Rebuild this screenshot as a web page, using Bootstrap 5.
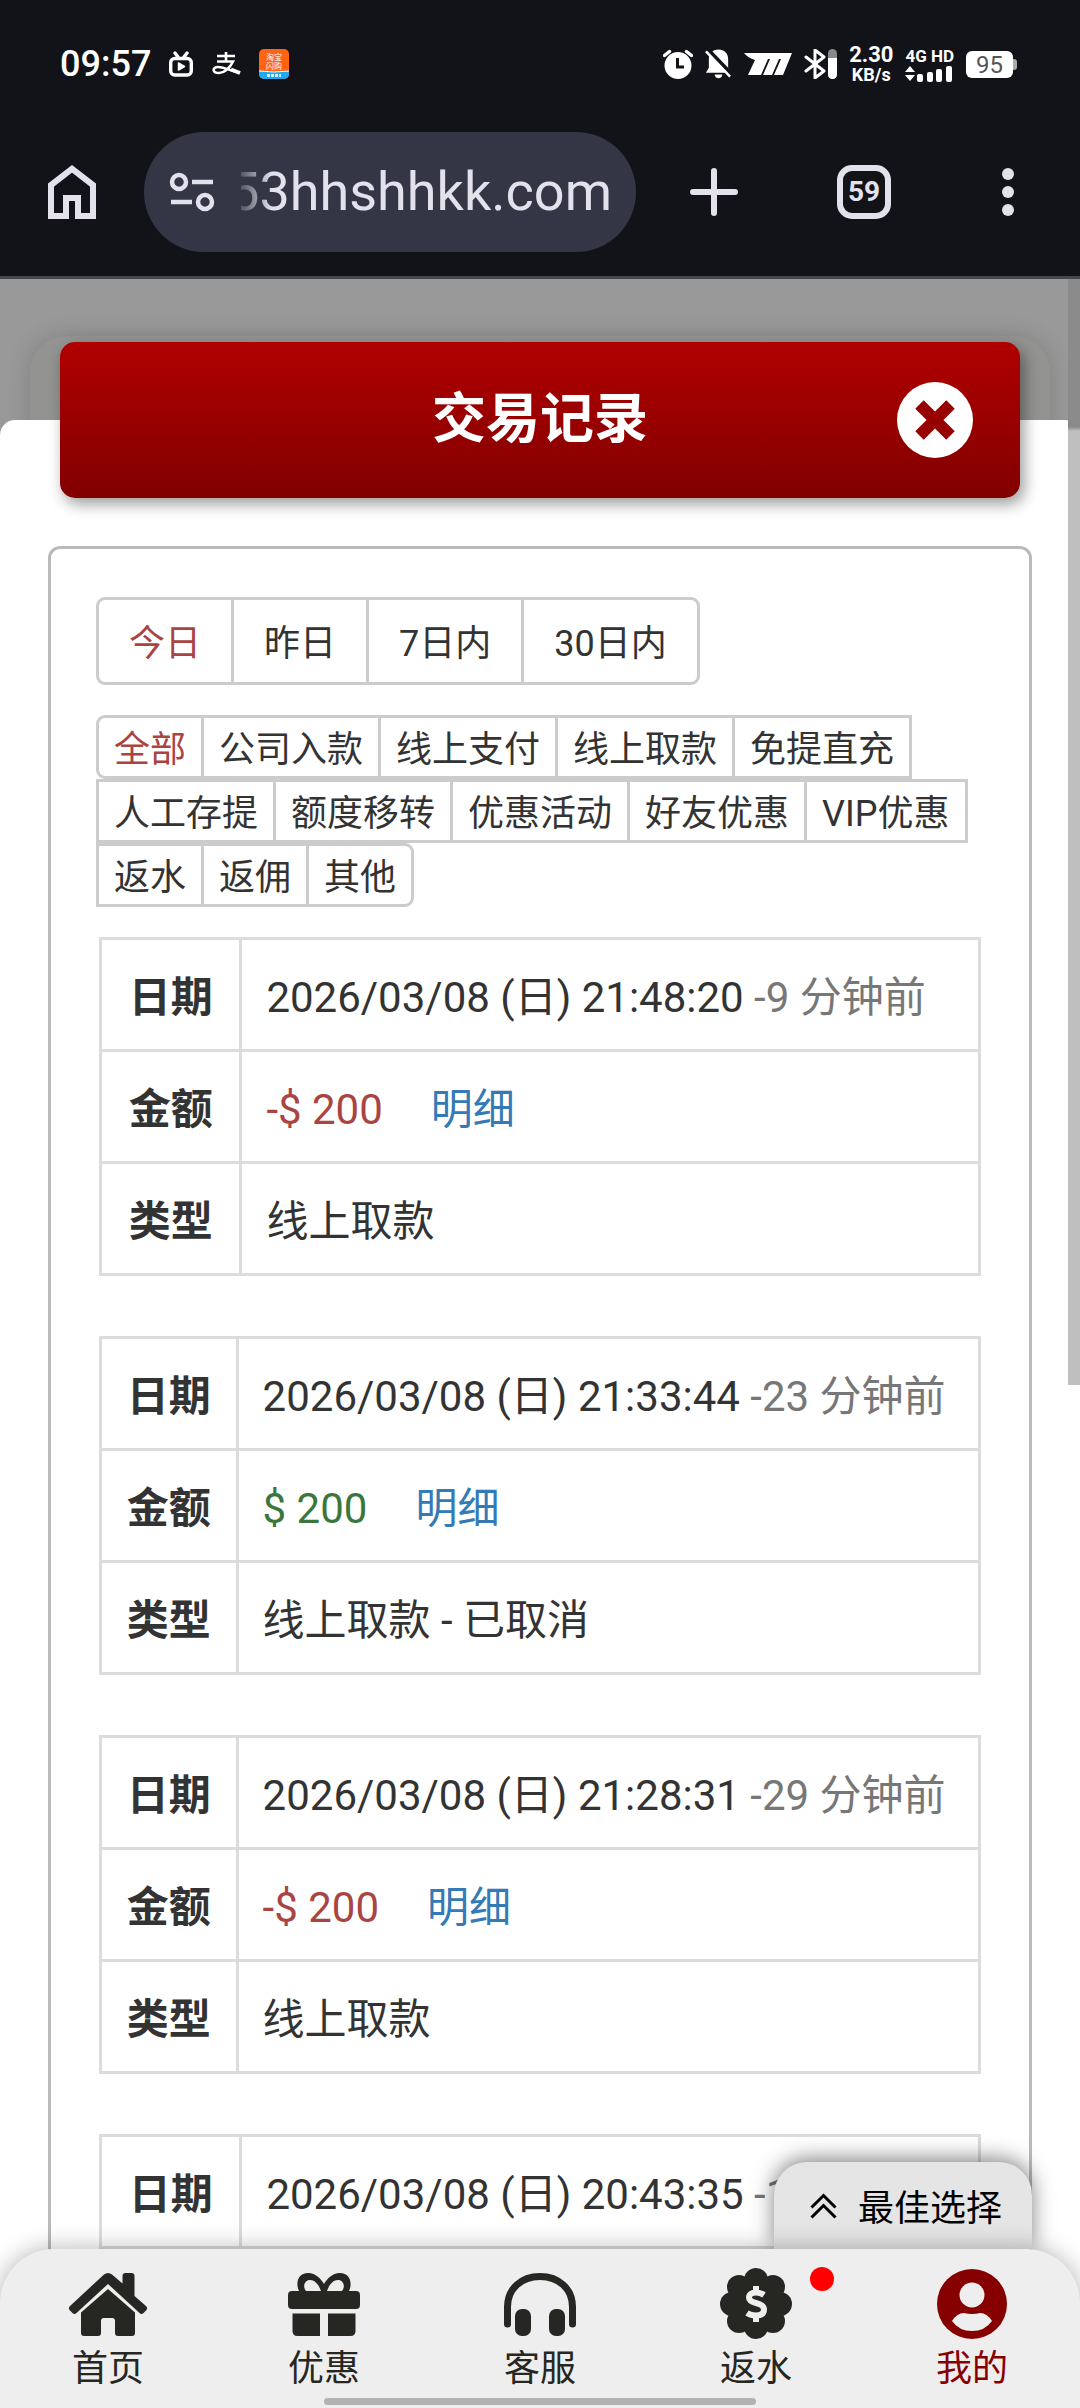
<!DOCTYPE html>
<html lang="zh-CN">
<head>
<meta charset="utf-8">
<meta name="viewport" content="width=device-width, initial-scale=1">
<title>交易记录</title>
<link href="https://cdn.jsdelivr.net/npm/bootstrap@5.3.0/dist/css/bootstrap.min.css" rel="stylesheet">
<style>
  :root { --line: #ccc; --ink: #333; --brand: #870000; }
  body { font-family: Roboto, "Noto Sans CJK SC", sans-serif; color: var(--ink); background: #fff; font-size: 42px; line-height: 60px; }
  .screen { height: 100vh; }

  /* phone status bar and browser toolbar */
  .chrome { background: #121319; border-bottom: 3px solid #46464f; color: #e3e1ec; }
  .status { padding: 45px 60px 49px; color: #fff; }
  .status-row { height: 38px; }
  .status-left { gap: 18px; }
  .status-right { gap: 12px; }
  .clock { font-size: 36px; font-weight: 500; line-height: 38px; }
  .net { font-weight: 700; text-align: center; }
  .net-num { font-size: 22px; line-height: 20px; }
  .net-unit { font-size: 18px; line-height: 19px; }
  .cell-label { font-size: 17px; font-weight: 700; line-height: 18px; }
  .battery { width: 47px; height: 27px; border-radius: 6px; background: #fff; color: #555; font-size: 24px; line-height: 28px; margin-right: 7px; }
  .battery::after { content: ""; position: absolute; left: 100%; top: 8px; width: 4px; height: 11px; border-radius: 0 3px 3px 0; background: #aaa; }
  .toolbar { padding-bottom: 24px; }
  .tool { border: 0; background: none; color: inherit; padding: 0; width: 150px; height: 120px; }
  .tool-home { width: 144px; }
  .tool-menu { width: 138px; margin-right: 3px; }
  .tab-count { width: 54px; height: 54px; border: 6px solid; border-radius: 15px; font-size: 28px; font-weight: 700; line-height: 42px; }
  .omnibox { height: 120px; border-radius: 60px; background: #343645; margin-right: 3px; padding: 0 24px; min-width: 0; }
  .omnibox input { font-size: 54px; line-height: 72px; color: #e3e1ec; background: none; border: 0; outline: 0; min-width: 0; padding: 0;
    -webkit-mask-image: linear-gradient(to right, transparent 25px, rgba(0,0,0,.2) 25px, #000 56px); mask-image: linear-gradient(to right, transparent 25px, rgba(0,0,0,.2) 25px, #000 56px); }

  /* dialog over the dimmed page */
  .stage { background: #999; min-height: 0; }
  .halo { margin: 57px 30px 0; padding: 6px 30px 0; background: #939391; border-radius: 36px 36px 0 0; box-shadow: 0 0 24px rgba(0,0,0,.16); }
  .title-bar { height: 156px; border-radius: 15px; background: linear-gradient(#b00000, #820000); box-shadow: 4px 6px 15px rgba(0,0,0,.4); color: #fff; z-index: 2; }
  .title-bar h1 { font-size: 54px; font-weight: 700; line-height: 78px; margin: 0; }
  .close-btn { border: 0; background: none; padding: 0; right: 47px; top: 40px; width: 76px; height: 76px; line-height: 0; }
  .sheet { margin-top: -78px; padding: 126px 48px 0; background: #fff; border-radius: 15px 15px 0 0; z-index: 1; }
  .panel { border: 3px solid #bababa; border-radius: 12px; padding: 48px 45px; }

  .pick { border: 3px solid var(--line); background: #fff; color: var(--ink); font-size: 36px; border-radius: 0; margin-left: -3px; }
  .pick.active { color: #a94442; }
  .pick:first-child { border-radius: 9px 0 0 9px; }
  .pick:last-child { border-radius: 0 9px 9px 0; }
  .picks { padding-left: 3px; }
  .picks-day .pick { padding: 17px 30px 11px; line-height: 54px; }
  .picks-type { margin: 30px 0; }
  .picks-type .pick { padding: 6px 15px 0; line-height: 52px; }

  .record { border: 0; margin: 0 0 60px; --bs-table-color: var(--ink); }
  .record-wrap { padding: 0 3px; }
  .record th, .record td { border: 3px solid #dcdcdc; padding: 28px 24px 21px; line-height: 60px; white-space: nowrap; vertical-align: middle; color: var(--ink); }
  .record th { text-align: center; font-weight: 700; }
  .record .ago { color: #777; }
  .record .out { color: #a94442; }
  .record .in { color: #3c763d; }
  .record a { color: #337ab7; text-decoration: none; margin-left: 48px; }

  .scroll-thumb { top: 279px; right: 0; width: 12px; height: 1106px; background: linear-gradient(#8b8b8b 148px, #bfbfbf 152px); z-index: 5; }

  /* bottom navigation */
  .best { right: 48px; bottom: 159px; height: 87px; padding: 0 30px 0 36px; border: 0; border-radius: 33px 33px 0 0; background: #e5e5e5; color: #000; font-size: 36px; line-height: 54px; gap: 21px; z-index: 3; box-shadow: 0 -3px 21px rgba(0,0,0,.5); }
  .best span { padding-top: 6px; }
  .tabs { background: #eee; border-radius: 54px 54px 0 0; height: 159px; padding-top: 18px; box-shadow: 0 0 24px rgba(0,0,0,.3); z-index: 4; }
  .tabs a { color: #262622; text-decoration: none; font-size: 36px; line-height: 60px; }
  .tabs a.current { color: var(--brand); }
  .tabs svg { height: 72px; width: 84px; }
  .dot { width: 24px; height: 24px; border-radius: 50%; background: #f00; left: 100%; top: 0; margin-left: 12px; }
  .home-bar { left: 30%; width: 40%; bottom: 3px; height: 7px; border-radius: 4px; background: #b3b3b3; z-index: 6; }
</style>
</head>
<body>
<div class="screen d-flex flex-column position-relative overflow-hidden">

  <header class="chrome flex-shrink-0">
    <div class="status">
      <div class="status-row d-flex align-items-center justify-content-between">
        <div class="status-left d-flex align-items-center">
          <span class="clock">09:57</span>
          <svg width="24" height="26" viewBox="0 0 24 26" fill="none" stroke="#fff" stroke-width="3.4" stroke-linecap="round"><rect x="1.7" y="7.5" width="20.6" height="16.5" rx="4"/><path d="M6 2l3 4M18 2l-3 4"/><path d="M9.500 12v7l6-3.500z" fill="#fff" stroke-width="1.500" stroke-linejoin="round"/></svg>
          <svg width="30" height="24" viewBox="0 0 30 24" fill="none" stroke="#fff" stroke-width="2.600"><path d="M6 4h18M15 0v9M6 9.500h16C19 16 13 21 8 21c-7 0-7-6-1-6 6 0 12 3.500 21.500 6"/><path d="M20 17.500l9 3.500" stroke-width="4"/></svg>
          <svg width="30" height="30" viewBox="0 0 30 30"><defs><clipPath id="appclip"><rect width="30" height="30" rx="5"/></clipPath></defs><g clip-path="url(#appclip)"><rect width="30" height="30" fill="#ff6412"/><path d="M0 22q15 2 30 0v8H0z" fill="#1fa8f4"/><path d="M0 22q15 2 30 0" stroke="#fff" stroke-width="1" fill="none"/><path d="M8 26.500h14" stroke="#d9f1ff" stroke-width="3" stroke-dasharray="3 1"/></g><text x="15" y="11" text-anchor="middle" font-size="8" fill="#fff">淘宝</text><text x="15" y="20" text-anchor="middle" font-size="8" fill="#fff">闪购</text></svg>
        </div>
        <div class="status-right d-flex align-items-center">
          <svg width="30" height="30" viewBox="0 0 30 30"><circle cx="15" cy="16.500" r="13.500" fill="#fff"/><path d="M1.500 6.500l5-4M28.500 6.500l-5-4" stroke="#fff" stroke-width="3.500" stroke-linecap="round"/><path d="M14.500 9v9H21" fill="none" stroke="#121319" stroke-width="3"/></svg>
          <svg width="27" height="30" viewBox="0 0 28 30"><path d="M14 0c6 0 10 4 10 10v9l3 5H1l3-5v-9C4 4 8 0 14 0zM10 26h8c0 5-8 5-8 0z" fill="#fff"/><path d="M3 0l25 26" stroke="#121319" stroke-width="4"/><path d="M1 2l25 26" stroke="#fff" stroke-width="2.600"/></svg>
          <svg width="48" height="22" viewBox="0 0 48 22" fill="#fff"><path d="M0 0h48l-9 22h-9l7-16h-2l-7 16h-9l7-16h-2l-7 16H4l7-15Q4 5 0 0z"/></svg>
          <svg width="33" height="30" viewBox="0 0 33 30"><path d="M2 8l18 14-9 7V1l9 7L2 22" fill="none" stroke="#fff" stroke-width="3" stroke-linejoin="round" stroke-linecap="round"/><rect x="24" width="9" height="30" rx="4.500" fill="#8a8a8d"/><path d="M24 9h9v16.500a4.500 4.500 0 0 1-9 0z" fill="#fff"/></svg>
          <div class="net d-flex flex-column"><span class="net-num">2.30</span><span class="net-unit">KB/s</span></div>
          <div class="d-flex flex-column">
            <span class="cell-label">4G HD</span>
            <svg width="48" height="17" viewBox="0 0 48 17" fill="#fff"><path d="M0 7l5-6 5 6zM0 10h10l-5 6z"/><rect x="12" y="9" width="6" height="8" rx="2"/><rect x="22" y="7" width="6" height="10" rx="2"/><rect x="31" y="4" width="6" height="13" rx="2"/><rect x="41" y="1" width="6" height="16" rx="2"/></svg>
          </div>
          <div class="battery position-relative text-center">95</div>
        </div>
      </div>
    </div>
    <div class="toolbar d-flex align-items-center">
      <button type="button" class="tool tool-home flex-shrink-0 d-flex align-items-center justify-content-center" aria-label="主页">
        <svg width="48" height="54" viewBox="0 0 48 54" fill="none" stroke="currentColor" stroke-width="6"><path d="M3 51V20L24 3.800 45 20v31H30V33H18v18z"/></svg>
      </button>
      <div class="omnibox flex-grow-1 d-flex align-items-center">
        <svg class="flex-shrink-0" width="48" height="42" viewBox="0 0 48 42" fill="none" stroke="#e3e1ec" stroke-width="4.500"><circle cx="11" cy="11" r="7"/><path d="M24 11h21M3 31h21"/><circle cx="37" cy="31" r="7"/></svg>
        <input type="text" class="flex-grow-1 text-end" aria-label="网址" value="53hhshhkk.com">
      </div>
      <button type="button" class="tool flex-shrink-0" aria-label="新标签页">
        <svg class="d-block mx-auto" width="48" height="48" viewBox="0 0 48 48" stroke="currentColor" stroke-width="6" stroke-linecap="round"><path d="M24 3v42M3 24h42"/></svg>
      </button>
      <button type="button" class="tool flex-shrink-0" aria-label="标签页"><span class="tab-count d-block mx-auto">59</span></button>
      <button type="button" class="tool tool-menu flex-shrink-0" aria-label="菜单">
        <svg class="d-block mx-auto" width="12" height="48" viewBox="0 0 12 48" fill="currentColor"><circle cx="6" cy="6" r="6"/><circle cx="6" cy="24" r="6"/><circle cx="6" cy="42" r="6"/></svg>
      </button>
    </div>
  </header>

  <main class="stage flex-grow-1 d-flex flex-column">
    <div class="halo">
      <div class="title-bar position-relative d-flex align-items-center justify-content-center">
        <h1>交易记录</h1>
        <button type="button" class="close-btn position-absolute" aria-label="关闭">
          <svg width="76" height="76" viewBox="0 0 76 76"><circle cx="38" cy="38" r="38" fill="#fff"/><path d="M22.500 22.500l31 31M53.500 22.500l-31 31" stroke="#980000" stroke-width="12"/></svg>
        </button>
      </div>
    </div>

    <div class="sheet position-relative flex-grow-1 d-flex flex-column">
      <div class="panel flex-grow-1">
        <div class="picks picks-day d-flex" role="group" aria-label="日期范围">
          <button type="button" class="pick active">今日</button>
          <button type="button" class="pick">昨日</button>
          <button type="button" class="pick">7日内</button>
          <button type="button" class="pick">30日内</button>
        </div>
        <div class="picks picks-type d-flex flex-wrap" role="group" aria-label="交易类型">
          <button type="button" class="pick active">全部</button>
          <button type="button" class="pick">公司入款</button>
          <button type="button" class="pick">线上支付</button>
          <button type="button" class="pick">线上取款</button>
          <button type="button" class="pick">免提直充</button>
          <button type="button" class="pick">人工存提</button>
          <button type="button" class="pick">额度移转</button>
          <button type="button" class="pick">优惠活动</button>
          <button type="button" class="pick">好友优惠</button>
          <button type="button" class="pick">VIP优惠</button>
          <button type="button" class="pick">返水</button>
          <button type="button" class="pick">返佣</button>
          <button type="button" class="pick">其他</button>
        </div>

        <div class="record-wrap">
          <table class="table table-bordered record">
            <tr><th scope="row">日期</th><td>2026/03/08 (日) 21:48:20 <span class="ago">-9 分钟前</span></td></tr>
            <tr><th scope="row">金额</th><td><span class="out">-$ 200</span><a href="#">明细</a></td></tr>
            <tr><th scope="row">类型</th><td>线上取款</td></tr>
          </table>
          <table class="table table-bordered record">
            <tr><th scope="row">日期</th><td>2026/03/08 (日) 21:33:44 <span class="ago">-23 分钟前</span></td></tr>
            <tr><th scope="row">金额</th><td><span class="in">$ 200</span><a href="#">明细</a></td></tr>
            <tr><th scope="row">类型</th><td>线上取款 - 已取消</td></tr>
          </table>
          <table class="table table-bordered record">
            <tr><th scope="row">日期</th><td>2026/03/08 (日) 21:28:31 <span class="ago">-29 分钟前</span></td></tr>
            <tr><th scope="row">金额</th><td><span class="out">-$ 200</span><a href="#">明细</a></td></tr>
            <tr><th scope="row">类型</th><td>线上取款</td></tr>
          </table>
          <table class="table table-bordered record">
            <tr><th scope="row">日期</th><td>2026/03/08 (日) 20:43:35 <span class="ago">-1 小时前</span></td></tr>
          </table>
        </div>
      </div>
    </div>
  </main>

  <div class="scroll-thumb position-absolute"></div>

  <button type="button" class="best position-absolute d-flex align-items-center">
    <svg width="27" height="26" viewBox="0 0 27 26" fill="none" stroke="#000" stroke-width="3"><path d="M1.500 14.500l12-12 12 12M1.500 24.500l12-12 12 12"/></svg>
    <span>最佳选择</span>
  </button>

  <nav class="tabs position-absolute bottom-0 start-0 w-100 d-flex" aria-label="主导航">
    <a href="#" class="col d-flex flex-column align-items-center">
      <svg viewBox="0 0 84 72" fill="currentColor"><path d="M38 7.500q4-3 8 0l10.500 9V9q0-3 3-3h6q3 0 3 3v20l11.500 10q2 2 .5 4l-3 3q-2 2-4 0L42 17 10.500 46q-2 2-4 0l-3-3q-1.500-2 .5-4z"/><path d="M42 22l27 23.500V66q0 3-3 3H52q-3 0-3-3V54q0-3-3-3h-8q-3 0-3 3v12q0 3-3 3H18q-3 0-3-3V45.500z"/></svg>
      <span>首页</span>
    </a>
    <a href="#" class="col d-flex flex-column align-items-center">
      <svg viewBox="0 0 84 72" fill="currentColor"><path d="M18 26c-5-8-3-20 8-20 8 0 13 6 16 11 3-5 8-11 16-11 11 0 13 12 8 20z"/><path d="M24 24c-4-5-1-11 4-11 5 0 9 5 11 11zM60 24c4-5 1-11-4-11-5 0-9 5-11 11z" fill="#eee"/><rect x="6" y="24" width="72" height="18" rx="4"/><path d="M10.500 46.500H38V69H15.500q-5 0-5-5zM46 46.500h27.500V64q0 5-5 5H46z"/></svg>
      <span>优惠</span>
    </a>
    <a href="#" class="col d-flex flex-column align-items-center">
      <svg viewBox="0 0 84 72"><path d="M9.500 57V40C9.500 22 23 9.500 42 9.500S74.500 22 74.500 40v17" fill="none" stroke="currentColor" stroke-width="7" stroke-linecap="round"/><rect x="17" y="42" width="16" height="27" rx="7" fill="currentColor"/><rect x="51" y="42" width="16" height="27" rx="7" fill="currentColor"/></svg>
      <span>客服</span>
    </a>
    <a href="#" class="col d-flex flex-column align-items-center">
      <span class="position-relative d-flex"><svg viewBox="0 0 84 72" fill="currentColor"><circle cx="42" cy="37" r="28"/><circle cx="42" cy="13" r="12"/><circle cx="42" cy="60" r="12"/><circle cx="18" cy="37" r="12"/><circle cx="66" cy="37" r="12"/><circle cx="25" cy="20" r="12"/><circle cx="59" cy="20" r="12"/><circle cx="25" cy="54" r="12"/><circle cx="59" cy="54" r="12"/><path d="M50 28c-3-2-5-2.500-8-2.500-4.500 0-7 2-7 5s3 4.500 7 5.500 8 2.500 8 6.500-3 6-8 6c-3 0-6-.5-9-2.500M42 19v7M42 48v7" fill="none" stroke="#eee" stroke-width="6"/></svg><span class="dot position-absolute"></span></span>
      <span>返水</span>
    </a>
    <a href="#" class="col d-flex flex-column align-items-center current">
      <svg viewBox="0 0 84 72" fill="currentColor"><circle cx="42" cy="37" r="35"/><circle cx="42" cy="28" r="12.500" fill="#eee"/><path d="M22 54q5-8 12-8 8 2 16 0 7 0 12 8-7 10-20 10t-20-10z" fill="#eee"/></svg>
      <span>我的</span>
    </a>
  </nav>
  <div class="home-bar position-absolute"></div>
</div>
<script src="https://cdn.jsdelivr.net/npm/bootstrap@5.3.0/dist/js/bootstrap.bundle.min.js"></script>
</body>
</html>
